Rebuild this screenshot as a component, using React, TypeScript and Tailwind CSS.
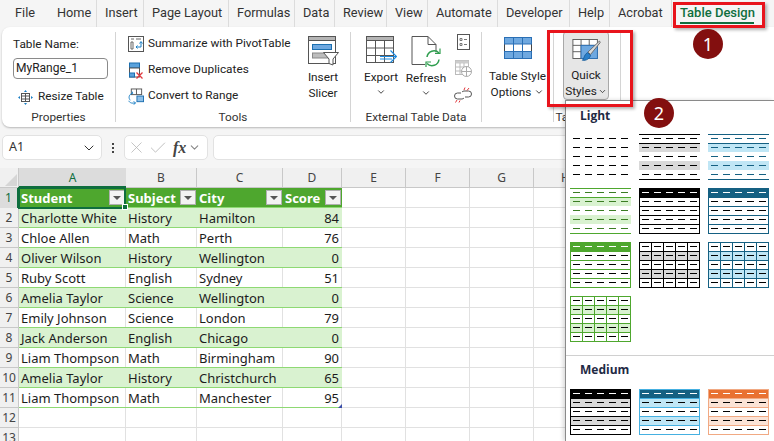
import { ChevronDown, Check, X } from 'lucide-react'

const tabs = [
  { name: 'File', w: 49 },
  { name: 'Home', w: 48 },
  { name: 'Insert', w: 47 },
  { name: 'Page Layout', w: 85 },
  { name: 'Formulas', w: 66 },
  { name: 'Data', w: 40 },
  { name: 'Review', w: 52 },
  { name: 'View', w: 41 },
  { name: 'Automate', w: 70 },
  { name: 'Developer', w: 72 },
  { name: 'Help', w: 40 },
  { name: 'Acrobat', w: 62 },
]

const rows = [
  ['Charlotte White', 'History', 'Hamilton', 84],
  ['Chloe Allen', 'Math', 'Perth', 76],
  ['Oliver Wilson', 'History', 'Wellington', 0],
  ['Ruby Scott', 'English', 'Sydney', 51],
  ['Amelia Taylor', 'Science', 'Wellington', 0],
  ['Emily Johnson', 'Science', 'London', 79],
  ['Jack Anderson', 'English', 'Chicago', 0],
  ['Liam Thompson', 'Math', 'Birmingham', 90],
  ['Amelia Taylor', 'History', 'Christchurch', 65],
  ['Liam Thompson', 'Math', 'Manchester', 95],
]

function Sep() {
  return <div className="w-px my-[5px] bg-[#d4d4d4] shrink-0" />
}

function GroupLabel({ children }: { children: React.ReactNode }) {
  return <div className="h-[18px] shrink-0 text-center text-[11.800px] leading-[16px] text-[#333] whitespace-nowrap">{children}</div>
}

function ToolRow({ icon, label }: { icon: React.ReactNode; label: string }) {
  return (
    <div className="h-[26px] flex items-center gap-[4px] text-[11.800px] text-[#222] whitespace-nowrap">
      <span className="w-[16px] h-[18px] flex items-center justify-center">{icon}</span>
      {label}
    </div>
  )
}

function PivotIcon() {
  return (
    <svg width="16" height="16" viewBox="0 0 16 16" fill="none">
      <rect x="0.500" y="0.500" width="15" height="15" fill="#fff" stroke="#555" />
      <path d="M3 3h3M3 6h2v7H3zM8 3h5" stroke="#666" />
      <path d="M8 11h5V6M11.500 7.500L13 5.500l1.500 2M9.500 9.500L8 11l1.500 1.500" stroke="#1b7fc4" />
    </svg>
  )
}

function DupIcon() {
  return (
    <svg width="16" height="17" viewBox="0 0 16 17" fill="none">
      <rect x="1.500" y="1" width="10" height="5" fill="#5aa2dc" stroke="#1b6fb0" />
      <rect x="1.500" y="6" width="10" height="9" fill="#fff" stroke="#555" />
      <rect x="1.500" y="11" width="5" height="4" fill="#5aa2dc" stroke="#1b6fb0" />
      <path d="M8.500 10.500l6 6M14.500 10.500l-6 6" stroke="#e0393e" strokeWidth="1.300" />
    </svg>
  )
}

function ConvertIcon() {
  return (
    <svg width="17" height="17" viewBox="0 0 17 17" fill="none">
      <rect x="3.500" y="0.500" width="11" height="6" fill="#fff" stroke="#555" />
      <path d="M9 0.500v6" stroke="#555" />
      <rect x="9.500" y="8" width="7" height="6" fill="#8fc0e8" stroke="#1b6fb0" />
      <path d="M5 5C1 6 0 10 2.500 12.500M8 15.500H4C2 15 1 14 1 13M6 13.500l2 2-2 1.500M3 6l2-1L4 3" stroke="#1b7fc4" />
    </svg>
  )
}

function SlicerIcon() {
  return (
    <svg width="31" height="30" viewBox="0 0 31 30" fill="none">
      <rect x="0.500" y="0.500" width="27" height="27" fill="#fff" stroke="#555" />
      <rect x="0.500" y="0.500" width="27" height="4" fill="#b5b5b5" stroke="#555" />
      <rect x="4.500" y="8.500" width="19" height="5" fill="#6ea8e0" stroke="#1b6fb0" />
      <rect x="4.500" y="17" width="15" height="5" fill="#bdbdbd" stroke="#888" />
      <path d="M15.500 16.500h15l-5.500 6.500v6l-4-1.500V23z" fill="#fff" stroke="#555" />
    </svg>
  )
}

function ExportIcon() {
  return (
    <svg width="31" height="32" viewBox="0 0 31 32" fill="none">
      <rect x="0.500" y="0.500" width="27" height="26" fill="#fff" stroke="#555" />
      <rect x="0.500" y="0.500" width="27" height="4" fill="#b5b5b5" stroke="#555" />
      <path d="M9.500 4.500v22M18.500 4.500v22M0.500 12h27M0.500 19.500h27" stroke="#555" />
      <path d="M14 20.500h16M24.500 14.500l6 6-6 6" stroke="#1b8ae0" strokeWidth="1.200" fill="none" />
      <path d="M14 23h12" stroke="#1b8ae0" />
    </svg>
  )
}

function RefreshIcon() {
  return (
    <svg width="30" height="32" viewBox="0 0 30 32" fill="none">
      <path d="M1 0.500h16l8 8v8M1 0.500v28h13M17 0.500v8h8" stroke="#555" fill="#fff" />
      <path d="M16 21a7 7 0 0 1 12-4M28 23.500a7 7 0 0 1-12 4" stroke="#2f9e4f" strokeWidth="1.500" />
      <path d="M29 12.500v5h-5M15 31v-5h5" stroke="#2f9e4f" strokeWidth="1.200" />
    </svg>
  )
}

function SideIcons() {
  return (
    <div className="flex flex-col items-center gap-[10px] -mt-[2px]">
      <svg width="13" height="16" viewBox="0 0 13 16" fill="none">
        <rect x="0.500" y="0.500" width="12" height="15" fill="#fff" stroke="#555" />
        <path d="M3 4.500h2v2H3zM3 9.500h2v2H3zM7 5.500h3M7 10.500h3" stroke="#777" />
      </svg>
      <svg width="17" height="17" viewBox="0 0 17 17" fill="none">
        <rect x="0.500" y="0.500" width="13" height="14" fill="#fff" stroke="#bbb" />
        <rect x="0.500" y="0.500" width="13" height="3" fill="#ccc" />
        <path d="M5 3v12M9 3v12M0.500 7h13M0.500 11h13" stroke="#bbb" />
        <circle cx="11.500" cy="11.500" r="5" fill="#fff" stroke="#aaa" />
        <path d="M6.500 11.500h10M11.500 6.500v10" stroke="#aaa" />
      </svg>
      <svg width="18" height="16" viewBox="0 0 18 16" fill="none">
        <path d="M7 6H3.500a3 3 0 0 0 0 6H8a3 3 0 0 0 2-1M11 10h3.500a3 3 0 0 0 0-6H10a3 3 0 0 0-2 1" stroke="#555" />
        <path d="M11 0.500l-1 2.500M15 1l-2 2.500M3 13l-1.500 2.500M6 13.500l-1 2" stroke="#e0393e" />
      </svg>
    </div>
  )
}

function TableStyleIcon() {
  return (
    <svg width="28" height="22" viewBox="0 0 28 22" fill="none">
      <rect x="0.500" y="0.500" width="27" height="21" fill="#fff" stroke="#444" />
      <rect x="0.500" y="0.500" width="27" height="6.500" fill="#6ea8e0" stroke="#2a6fb5" />
      <rect x="0.500" y="14.500" width="27" height="7" fill="#6ea8e0" stroke="#2a6fb5" />
      <path d="M9.500 0.500v21M18.500 0.500v21" stroke="#2a6fb5" />
    </svg>
  )
}

function QuickStylesIcon() {
  return (
    <svg width="31" height="32" viewBox="0 0 31 32" fill="none">
      <rect x="0.500" y="0.500" width="27" height="21" fill="#fff" stroke="#555" />
      <path d="M0.500 7h27M0.500 14h27M9.500 0.500v21M18.500 0.500v21" stroke="#555" />
      <rect x="9.500" y="7" width="18" height="14.500" fill="#6ea8e0" stroke="#2a6fb5" />
      <path d="M29 3c1-1 2 0 1.500 1L20 17l-3-2.500z" fill="#d9d9d9" stroke="#666" />
      <path d="M16.500 15l3.500 3c-1 4-5 6-9 5.500 2-1.500 1.500-6 5.500-8.500z" fill="#2a7fc9" stroke="#1b5f9c" />
    </svg>
  )
}

function Ribbon() {
  return (
    <div className="ml-[2px] h-[100px] bg-white rounded-l-lg shadow-[0_1px_2px_rgba(0,0,0,0.25)] flex [font-family:'Roboto',sans-serif]">
      <div className="w-[113px] shrink-0 flex flex-col">
        <div className="flex-1 pl-[11px] pt-[8px]">
          <div className="text-[11.800px] leading-[18px] text-[#222]">Table Name:</div>
          <div className="mt-[5px] w-[95px] h-[21px] border border-[#8a8a8a] rounded-[4px] px-[2px] text-[12px] leading-[19px] text-[#222]">MyRange_1</div>
          <div className="mt-[6px] ml-[5px] h-[24px] flex items-center gap-[5px] text-[11.800px] text-[#222]">
            <svg width="15" height="15" viewBox="0 0 15 15" fill="none">
              <rect x="3.500" y="3.500" width="8" height="8" fill="#fff" stroke="#555" />
              <path d="M3.500 6h8M7.500 3.500v8M3.500 9h8" stroke="#555" />
              <path d="M7.500 0l-1.500 2h3zM7.500 15l-1.500-2h3zM0 7.500l2-1.500v3zM15 7.500l-2-1.500v3z" fill="#1b7fc4" />
            </svg>
            Resize Table
          </div>
        </div>
        <GroupLabel>Properties</GroupLabel>
      </div>
      <Sep />
      <div className="w-[234px] shrink-0 flex flex-col">
        <div className="flex-1 flex pl-[12px] pt-[4px] min-h-0">
          <div className="w-[178px]">
            <ToolRow icon={<PivotIcon />} label="Summarize with PivotTable" />
            <ToolRow icon={<DupIcon />} label="Remove Duplicates" />
            <ToolRow icon={<ConvertIcon />} label="Convert to Range" />
          </div>
          <div className="flex flex-col items-center pt-[5px] w-[34px] text-[11.800px] leading-[16px] text-[#222]">
            <SlicerIcon />
            <div className="mt-[3px]">Insert</div>
            <div>Slicer</div>
          </div>
        </div>
        <GroupLabel>Tools</GroupLabel>
      </div>
      <Sep />
      <div className="w-[130px] shrink-0 flex flex-col">
        <div className="flex-1 flex pl-[7px] pt-[9px] min-h-0 text-[11.800px] leading-[16px] text-[#222]">
          <div className="w-[46px] flex flex-col items-center">
            <ExportIcon />
            <div className="mt-[1px]">Export</div>
            <ChevronDown size={10} className="mt-[2px]" />
          </div>
          <div className="w-[44px] flex flex-col items-center">
            <RefreshIcon />
            <div className="mt-[2px]">Refresh</div>
            <ChevronDown size={10} className="mt-[2px]" />
          </div>
          <div className="ml-[6px]">
            <SideIcons />
          </div>
        </div>
        <GroupLabel>External Table Data</GroupLabel>
      </div>
      <Sep />
      <div className="w-[71px] shrink-0 flex flex-col items-center pt-[10px] text-[11.800px] leading-[16px] text-[#222]">
        <TableStyleIcon />
        <div className="mt-[9px] whitespace-nowrap">Table Style</div>
        <div className="flex items-center gap-[3px]">Options <ChevronDown size={10} /></div>
      </div>
      <Sep />
      <div className="w-[66px] shrink-0 flex flex-col">
        <div className="flex-1 pl-[9px] pt-[4px] min-h-0">
          <div className="w-[46px] h-[69px] bg-[#e6e6e6] border border-[#a8a8a8] rounded-[4px] flex flex-col items-center pt-[7px] text-[11.800px] leading-[16px] text-[#222]">
            <QuickStylesIcon />
            <div className="-mt-[1px]">Quick</div>
            <div className="flex items-center gap-[1px] whitespace-nowrap">Styles <ChevronDown size={9} /></div>
          </div>
        </div>
        <GroupLabel>Table Styles</GroupLabel>
      </div>
      <Sep />
    </div>
  )
}

function FormulaBar() {
  return (
    <div className="mt-[8px] h-[25px] flex text-[#333]">
      <div className="ml-[2px] w-[100px] bg-white border border-[#e2e2e2] rounded-[5px] flex items-center justify-between pl-[6px] pr-[4px] text-[12.500px]">
        A1
        <ChevronDown size={16} strokeWidth={1.500} />
      </div>
      <div className="w-[22px] flex flex-col items-center justify-center gap-[2px]">
        <span className="w-[2px] h-[2px] bg-[#444]" />
        <span className="w-[2px] h-[2px] bg-[#444]" />
        <span className="w-[2px] h-[2px] bg-[#444]" />
      </div>
      <div className="w-[84px] bg-white border border-[#e2e2e2] rounded-[5px] flex items-center pl-[2px]">
        <X size={19} strokeWidth={1} className="text-[#b5b5b5]" />
        <Check size={20} strokeWidth={1} className="ml-[2px] text-[#b5b5b5]" />
        <span className="ml-[5px] text-[16px] italic font-bold text-[#444] [font-family:'Liberation_Serif',serif]">fx</span>
        <ChevronDown size={13} className="ml-[2px] text-[#888]" />
      </div>
      <div className="ml-[5px] flex-1 bg-white border border-[#e2e2e2] rounded-l-[5px]" />
    </div>
  )
}

function FilterBtn() {
  return (
    <span className="absolute right-[1px] top-[2px] w-[16px] h-[15px] bg-[#f3f3f3] border border-[#b0b0b0] flex items-center justify-center">
      <span className="w-0 h-0 border-x-[4px] border-x-transparent border-t-[4px] border-t-[#555]" />
    </span>
  )
}

function Sheet() {
  const base = 'h-[20px] shrink-0 border-r border-b border-[#e1e1e1] leading-[20px] whitespace-nowrap px-[2px]'
  const blank = (
    <>
      <div className={`${base} w-[64px]`} />
      <div className={`${base} w-[64px]`} />
      <div className={`${base} w-[64px]`} />
      <div className={`${base} w-[64px]`} />
      <div className={`${base} w-[64px]`} />
      <div className={`${base} w-[64px]`} />
    </>
  )
  return (
    <div className="relative mt-[8px] bg-white text-[13px] text-[#1c1c1c]">
      <div className="flex h-[20px] bg-[#f0f0f0] text-[12px] text-[#444] leading-[20px] text-center">
        <div className="w-[19px] shrink-0 border-r border-b border-[#c8c8c8] flex items-end justify-end">
          <span className="m-[1px] w-0 h-0 border-l-[12px] border-l-transparent border-b-[12px] border-b-[#d6d6d6]" />
        </div>
        <div className="w-[107px] shrink-0 bg-[#dcdcdc] text-[#0f6e3e] border-b-2 border-[#0f6e3e]">A</div>
        <div className="w-[71px] shrink-0 border-r border-b border-[#c8c8c8]">B</div>
        <div className="w-[86px] shrink-0 border-r border-b border-[#c8c8c8]">C</div>
        <div className="w-[59px] shrink-0 border-r border-b border-[#c8c8c8]">D</div>
        <div className="w-[64px] shrink-0 border-r border-b border-[#c8c8c8]">E</div>
        <div className="w-[64px] shrink-0 border-r border-b border-[#c8c8c8]">F</div>
        <div className="w-[64px] shrink-0 border-r border-b border-[#c8c8c8]">G</div>
        <div className="w-[64px] shrink-0 border-r border-b border-[#c8c8c8]">H</div>
        <div className="w-[64px] shrink-0 border-r border-b border-[#c8c8c8]">I</div>
      </div>

      <div className="flex h-[20px]">
        <div className="w-[19px] shrink-0 bg-[#dcdcdc] text-[#0f6e3e] border-r-2 border-[#0f6e3e] text-center text-[12px] leading-[20px]">1</div>
        <div className="flex bg-[#4ea72e] text-white font-bold leading-[20px] border-b border-[#8ed973]">
          <div className="relative w-[107px] px-[2px]">Student<FilterBtn /></div>
          <div className="relative w-[71px] px-[2px]">Subject<FilterBtn /></div>
          <div className="relative w-[86px] px-[2px]">City<FilterBtn /></div>
          <div className="relative w-[59px] px-[2px]">Score<FilterBtn /></div>
        </div>
        {blank}
      </div>

      {rows.map((r, i) => {
        const band = i % 2 === 0
        const cell = band ? 'bg-[#d9f2d0] border-[#d9f2d0]' : 'bg-white border-[#e1e1e1]'
        return (
          <div key={i} className="flex h-[20px]">
            <div className="w-[19px] shrink-0 bg-[#f0f0f0] border-r border-b border-[#c8c8c8] text-center text-[12px] leading-[20px] text-[#444]">{i + 2}</div>
            <div className="flex border-b border-[#8ed973] h-[20px] leading-[20px] whitespace-nowrap">
              <div className={`w-[107px] px-[2px] border-r ${cell}`}>{r[0]}</div>
              <div className={`w-[71px] px-[2px] border-r ${cell}`}>{r[1]}</div>
              <div className={`w-[86px] px-[2px] border-r ${cell}`}>{r[2]}</div>
              <div className={`w-[59px] px-[2px] border-r text-right ${cell}`}>{r[3]}</div>
            </div>
            {blank}
          </div>
        )
      })}

      {[12, 13].map((n) => (
        <div key={n} className="flex h-[20px]">
          <div className="w-[19px] shrink-0 bg-[#f0f0f0] border-r border-b border-[#c8c8c8] text-center text-[12px] leading-[20px] text-[#444]">{n}</div>
          <div className={`${base} w-[107px]`} />
          <div className={`${base} w-[71px]`} />
          <div className={`${base} w-[86px]`} />
          <div className={`${base} w-[59px]`} />
          {blank}
        </div>
      ))}

      {/* selected cell and its handle */}
      <div className="absolute left-[18px] top-[19px] w-[108px] h-[22px] border-2 border-[#0f6e3e]" />
      <div className="absolute left-[122px] top-[36px] w-[6px] h-[6px] bg-[#0f6e3e] border border-white" />
      {/* table resize corner */}
      <div className="absolute left-[338px] top-[236px] w-0 h-0 border-l-[4px] border-l-transparent border-b-[4px] border-b-[#3b4fa8]" />
    </div>
  )
}

type ThumbProps = {
  line: string
  dash?: string
  band?: string
  head?: string
  border?: string
  vert?: boolean
  topBottom?: boolean
}

function Thumb({ line, dash = '#000', band, head, border, vert, topBottom }: ThumbProps) {
  const rowH = 9
  const h = 46
  return (
    <svg width="61" height={h} viewBox={`0 0 61 ${h}`} className="block">
      {head && <rect x="0" y="0" width="61" height={rowH} fill={head} />}
      {band && <rect x="0" y={rowH} width="61" height={rowH} fill={band} />}
      {band && <rect x="0" y={rowH * 3} width="61" height={rowH} fill={band} />}
      {topBottom && <path d={`M0 0.500H61M0 ${rowH + 0.5}H61M0 ${h - 0.5}H61`} stroke={line} />}
      {border && !topBottom && (
        <>
          <rect x="0.500" y="0.500" width="60" height={h - 1} fill="none" stroke={border} />
          {[1, 2, 3, 4].map((n) => (
            <path key={n} d={`M0 ${rowH * n + 0.5}H61`} stroke={border} />
          ))}
        </>
      )}
      {vert && [1, 2, 3, 4].map((n) => <path key={n} d={`M${n * 12 + 0.5} 0V46`} stroke={border} />)}
      {[0, 1, 2, 3, 4].map((r) =>
        [0, 1, 2, 3, 4].map((c) => (
          <rect
            key={`${r}-${c}`}
            x={3 + c * 12}
            y={4 + r * rowH}
            width="7"
            height="1"
            fill={r === 0 && head ? '#fff' : dash}
          />
        )),
      )}
    </svg>
  )
}

function StylesMenu() {
  return (
    <div className="absolute left-[565px] top-[100px] w-[209px] h-[341px] bg-white border-l border-t border-[#8a8a8a] shadow-[-2px_0_4px_rgba(0,0,0,0.15)] [font-family:'Open_Sans',sans-serif]">
      <div className="pl-[14px] pt-[7px] h-[33px] text-[12px] leading-[16px] font-bold text-[#1f2a44]">Light</div>
      <div className="pl-[4px] pr-[5px] grid grid-cols-[61px_61px_61px] gap-x-[8px] gap-y-[8px]">
        <Thumb line="#000" />
        <Thumb line="#000" band="#d9d9d9" topBottom />
        <Thumb line="#156082" dash="#156082" band="#c0e6f5" topBottom />
        <Thumb line="#4ea72e" dash="#3b7d23" band="#d9f2d0" topBottom />
        <Thumb line="#000" head="#000" border="#000" />
        <Thumb line="#156082" head="#156082" border="#156082" />
        <Thumb line="#4ea72e" head="#4ea72e" border="#4ea72e" />
        <Thumb line="#000" band="#d9d9d9" border="#000" vert />
        <Thumb line="#156082" band="#c0e6f5" border="#156082" vert />
        <Thumb line="#4ea72e" band="#d9f2d0" border="#4ea72e" vert />
      </div>
      <div className="mt-[13px] h-px bg-[#d0d0d0]" />
      <div className="pl-[14px] pt-[6px] h-[33px] text-[12px] leading-[16px] font-bold text-[#1f2a44]">Medium</div>
      <div className="pl-[4px] grid grid-cols-[61px_61px_61px] gap-x-[8px]">
        <Thumb line="#000" head="#000" band="#d9d9d9" border="#000" />
        <Thumb line="#45b0e1" head="#156082" band="#c0e6f5" border="#45b0e1" />
        <Thumb line="#f1a983" head="#e97132" band="#fbe3d6" border="#f1a983" />
      </div>
    </div>
  )
}

export default function App() {
  return (
    <div className="relative w-[774px] h-[441px] overflow-hidden bg-[#f5f5f5] [font-family:'Noto_Sans',sans-serif]">
      <div className="h-[27px] flex text-[12.750px] text-[#333] leading-[26px] overflow-hidden [font-family:'Roboto',sans-serif]">
        {tabs.map((t, i) => (
          <div
            key={t.name}
            className={`shrink-0 ${i > 0 ? 'pl-[8px] border-r border-[#dcdcdc]' : 'pl-[15px]'}`}
            style={{ width: t.w }}
          >
            {t.name}
          </div>
        ))}
        <div className="pl-[8px] shrink-0 w-[90px] text-[13px] text-[#0f6e3e] font-medium relative">
          Table Design
          <div className="absolute left-[8px] right-[8px] top-[22px] h-[2px] bg-[#0f6e3e]" />
        </div>
      </div>
      <Ribbon />
      <FormulaBar />
      <Sheet />
      <StylesMenu />

      <div className="absolute left-[547px] top-[30px] w-[86px] h-[77px] border-[3px] border-[#e8141c] shadow-[2px_2px_3px_rgba(0,0,0,0.3)]" />
      <div className="absolute left-[673px] top-[2px] w-[92px] h-[26px] border-[3px] border-[#e8141c] shadow-[2px_2px_3px_rgba(0,0,0,0.3)]" />
      <div className="absolute left-[693px] top-[29px] w-[30px] h-[30px] rounded-full bg-[#830f0f] text-white text-[18px] leading-[30px] text-center">1</div>
      <div className="absolute left-[644px] top-[98px] w-[30px] h-[30px] rounded-full bg-[#830f0f] text-white text-[18px] leading-[30px] text-center">2</div>
    </div>
  )
}
